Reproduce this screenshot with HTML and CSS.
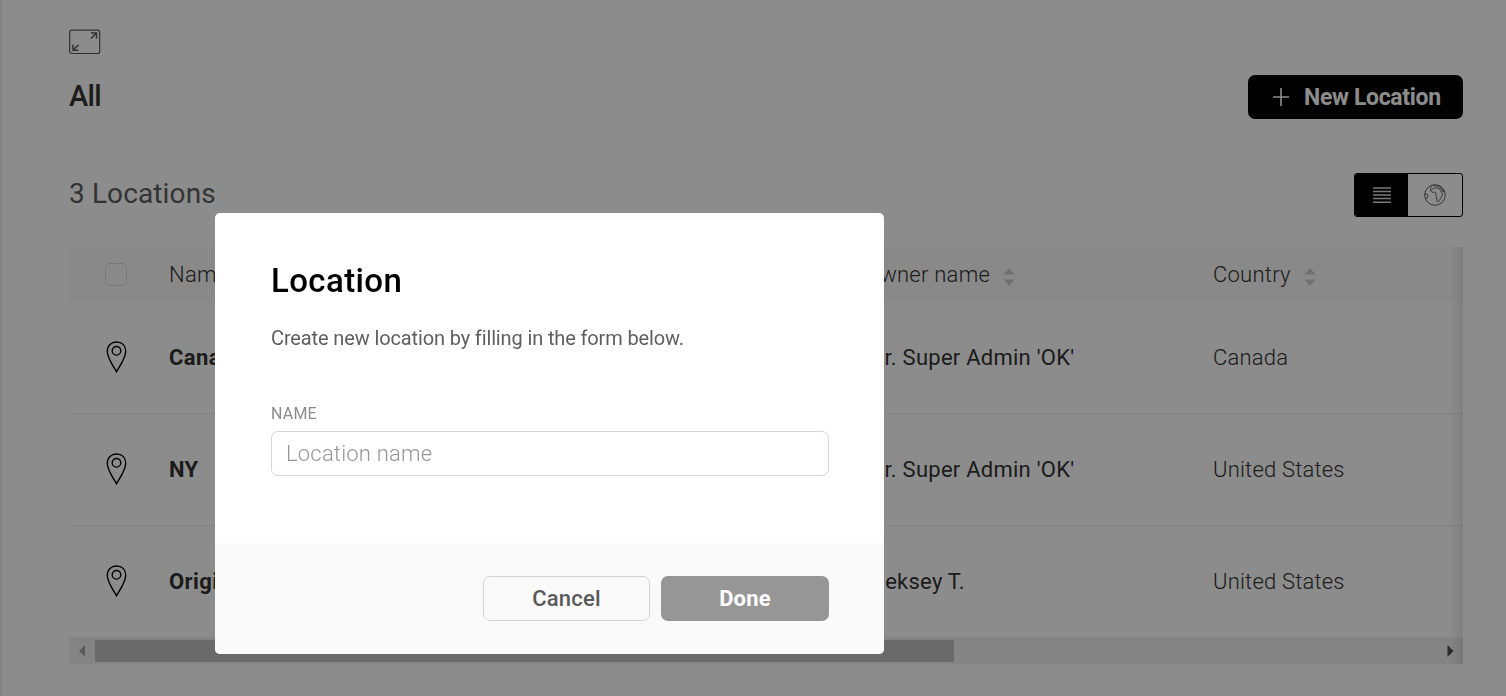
FILE: index.html
```html
<!DOCTYPE html>
<html lang="en">
<head>
<meta charset="utf-8">
<title>Locations</title>
<link rel="stylesheet" href="styles.css">
</head>
<body>
<svg class="defs" aria-hidden="true">
  <symbol id="pin" viewBox="0 0 20 32"><path d="M10 30.8C7.500 26 .8 17.500.8 10.300.8 4.400 4.600 1 10 1s9.200 3.400 9.200 9.300C19.200 17.500 12.500 26 10 30.800Z"/><circle cx="10" cy="9.800" r="4.300"/></symbol>
  <symbol id="sort" viewBox="0 0 12 18"><path d="M6 0l5.500 6.500H.5zM6 18l5.500-6.500H.5z"/></symbol>
</svg>
<main class="page">
  <svg class="expand" viewBox="0 0 32 26"><rect x=".7" y="1.200" width="30" height="23.300" rx="2"/><path class="expand-arrows" d="M22 9.500L27.300 4.200M22 4h5.500v5.500M9.500 15.700L4.200 21M4 15.500V21.200h5.500"/></svg>
  <header class="titlebar">
    <h1 class="title">All</h1>
    <button class="new"><svg class="plus" viewBox="0 0 18 18"><path d="M9 0v18M1 9h16"/></svg><span class="new-label">New Location</span></button>
  </header>
  <div class="subbar">
    <h2 class="count">3 Locations</h2>
    <div class="toggle">
      <span class="view active"><svg class="lines" viewBox="0 0 18 16"><path d="M0 1h18M0 4.500h18M0 8h18M0 11.500h18M0 15.200h18"/></svg></span>
      <span class="view"><svg class="globe" viewBox="0 0 22 22"><circle cx="11" cy="11" r="10.300"/><path d="M7.500 2.500C5.500 5 6.500 8 9 8.300c2-.4 3 .2 3 1.700-.3 2 .8 3.500.8 5 .2 2.500 1 3.500 2 2.500 1.500-1 1-2.500 1.800-3.700 1.300-1.400 2.200-3.500 1.700-4.800-1.300-.5-2-3-2.500-4.200-2 0-2.500-1-4-.8C9.800 3.500 8.500 4.800 7.500 6M9 1.200C10.500 2.300 13 1.800 15 2.500l3 2.500 1 3 1.500-1M1 10l2.700.5c.5 1.700-.2 2.700-1.500 4.500"/></svg></span>
    </div>
  </div>
  <section class="table">
    <div class="row head">
      <span class="mark"><i class="check"></i></span>
      <span class="cell">Name <svg class="sort"><use href="#sort"/></svg></span>
      <span class="cell"></span>
      <span class="cell">Owner name <svg class="sort"><use href="#sort"/></svg></span>
      <span class="cell">Country <svg class="sort"><use href="#sort"/></svg></span>
    </div>
    <div class="row">
      <span class="mark"><svg class="pin"><use href="#pin"/></svg></span>
      <span class="cell name">Canada</span><span class="cell"></span>
      <span class="cell owner">Mr. Super Admin 'OK'</span><span class="cell country">Canada</span>
    </div>
    <div class="row">
      <span class="mark"><svg class="pin"><use href="#pin"/></svg></span>
      <span class="cell name">NY</span><span class="cell"></span>
      <span class="cell owner">Mr. Super Admin 'OK'</span><span class="cell country">United States</span>
    </div>
    <div class="row">
      <span class="mark"><svg class="pin"><use href="#pin"/></svg></span>
      <span class="cell name">Origin</span><span class="cell"></span>
      <span class="cell owner">Aleksey T.</span><span class="cell country">United States</span>
    </div>
    <div class="scrollbar">
      <svg class="arrow" viewBox="0 0 26 27"><path class="arrow-off" d="M10 14l6-6v12z"/></svg>
      <div class="track"><div class="thumb"></div></div>
      <svg class="arrow" viewBox="0 0 26 27"><path class="arrow-on" d="M16.500 14l-6-6v12z"/></svg>
    </div>
  </section>
</main>
<div class="overlay">
  <form class="modal">
    <div class="modal-body">
      <h3 class="modal-title">Location</h3>
      <p class="modal-text">Create new location by filling in the form below.</p>
      <label class="label" for="name">NAME</label>
      <input class="input" id="name" placeholder="Location name">
    </div>
    <div class="modal-foot">
      <button type="button" class="btn cancel">Cancel</button>
      <button type="button" class="btn done">Done</button>
    </div>
  </form>
</div>
</body>
</html>
```
FILE: styles.css
```css
* { box-sizing: border-box; }
body { margin: 0; height: 696px; overflow: hidden; background: #fff; font-family: Roboto, sans-serif; color: #333; }
h1, h2, h3, p { margin: 0; }
button, input { font-family: inherit; }
svg { display: block; flex: none; fill: none; stroke: currentColor; }
.defs { position: absolute; width: 0; height: 0; }
.page { height: 696px; border-left: 2px solid #f0f0f0; padding: 29px 43px 0 67px; }
.expand { width: 32px; height: 26px; color: #5a5a5a; stroke-width: 1.2; }
.expand-arrows { stroke-width: 1.5; }
.titlebar { display: flex; justify-content: space-between; height: 44px; margin-top: 20px; }
.title { font-size: 29px; font-weight: 500; line-height: 42px; letter-spacing: -.7px; }
.new { display: flex; align-items: center; width: 215px; height: 44px; padding: 0 0 0 24px; gap: 14px; border: 0; border-radius: 7px; background: #000; color: #fff; font-size: 23px; font-weight: 700; letter-spacing: -.33px; white-space: nowrap; }
.new-label { padding-top: 1px; }
.plus { width: 18px; height: 18px; stroke-width: 1.6; }
.subbar { display: flex; justify-content: space-between; height: 44px; margin-top: 54px; }
.count { font-size: 28px; font-weight: 400; line-height: 41px; letter-spacing: .12px; color: #5d5d5d; }
.toggle { display: flex; width: 109px; border: 1px solid #000; border-radius: 3px; overflow: hidden; }
.view { flex: 1; display: flex; align-items: center; justify-content: center; color: #505050; }
.active { flex: 0 0 53px; background: #000; color: #ddd; }
.lines { width: 18px; height: 16px; stroke-width: 1.4; }
.globe { width: 22px; height: 22px; stroke-width: .9; }
.table { position: relative; margin-top: 30px; }
.table::after { content: ""; position: absolute; top: 0; right: 0; bottom: 0; width: 14px; background: linear-gradient(to right, transparent, rgba(0,0,0,.09)); }
.row { display: grid; grid-template-columns: 100px repeat(3, 348px) 250px; align-items: center; height: 112px; border-bottom: 1px solid #ededed; font-size: 22px; letter-spacing: .25px; }
.row:nth-child(4) { height: 111px; border: 0; }
.head { height: 55px; background: #fafafa; border: 0; border-radius: 4px; font-weight: 300; }
.mark { display: flex; padding-left: 36px; }
.check { width: 22px; height: 23px; border: 1px solid #d9d9d9; border-radius: 5px; }
.pin { width: 23px; height: 32px; margin-bottom: 2px; color: #000; stroke-width: 1.4; }
.cell { display: flex; align-items: center; white-space: nowrap; }
.name { font-weight: 700; letter-spacing: .4px; }
.country { font-weight: 300; letter-spacing: .2px; }
.sort { width: 12px; height: 18px; margin: 5px 0 0 13px; fill: #ccc; stroke: none; }
.scrollbar { display: flex; height: 27px; background: #f1f1f1; }
.arrow { width: 26px; height: 27px; stroke: none; }
.arrow-off { fill: #a3a3a3; }
.arrow-on { fill: #505050; }
.track { flex: 1; padding-top: 3px; }
.thumb { width: 859px; height: 22px; background: #c1c1c1; }
.overlay { position: fixed; inset: 0; background: rgba(0,0,0,.45); }
.modal { position: absolute; left: 215px; top: 213px; width: 669px; height: 441px; border-radius: 5px; overflow: hidden; background: #fff; }
.modal-body { height: 330px; padding: 47px 55px 0 56px; }
.modal-title { font-size: 33px; font-weight: 500; line-height: 42px; letter-spacing: .4px; color: #000; }
.modal-text { margin-top: 21px; font-size: 20px; line-height: 30px; letter-spacing: -.13px; color: #5f5f5f; white-space: nowrap; }
.label { display: block; margin-top: 51px; font-size: 16px; line-height: 20px; letter-spacing: .2px; color: #8c8c8c; }
.input { display: block; width: 558px; height: 45px; margin-top: 7px; padding: 0 14px; border: 1px solid #d6d6d6; border-radius: 7px; font-size: 22px; font-weight: 300; letter-spacing: .2px; background: #fff; }
.input::placeholder { color: #969696; }
.modal-foot { display: flex; justify-content: flex-end; gap: 11px; height: 111px; padding: 33px 55px 0 0; background: #fafafa; }
.btn { width: 168px; height: 45px; padding: 0; border-radius: 7px; font-size: 22px; font-weight: 500; letter-spacing: .2px; }
.cancel { width: 167px; border: 1px solid #d3d3d3; background: #fafafa; color: #5a5a5a; }
.done { border: 0; background: #969696; color: #fff; font-weight: 700; }
```
